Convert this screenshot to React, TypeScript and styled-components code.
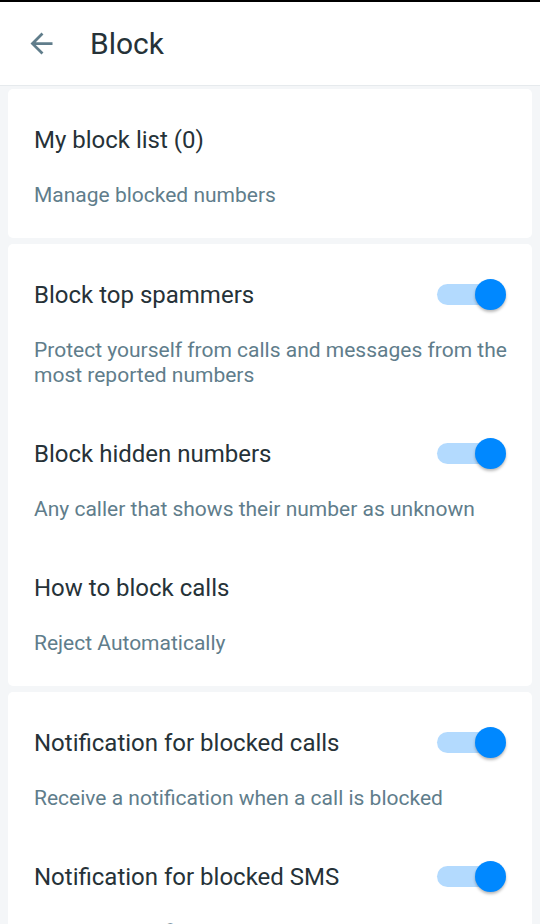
import React, { useState } from "react";
import styled, { createGlobalStyle } from "styled-components";

const GlobalStyle = createGlobalStyle`
  html, body {
    margin: 0;
    padding: 0;
    background: #f4f6f8;
    font-family: Roboto, "Noto Sans", "Liberation Sans", sans-serif;
    -webkit-font-smoothing: antialiased;
  }
  * { box-sizing: border-box; }
`;

const Screen = styled.div`
  width: 540px;
  height: 924px;
  overflow: hidden;
  background: #f4f6f8;
  border-top: 2px solid #000;
`;

const Header = styled.header`
  height: 84px;
  background: #ffffff;
  border-bottom: 1px solid #e6eaed;
  display: flex;
  align-items: center;
  padding-left: 25px;
  gap: 32px;
`;

const BackButton = styled.button`
  width: 33px;
  height: 33px;
  padding: 0;
  border: none;
  background: transparent;
  display: flex;
  align-items: center;
  justify-content: center;
  color: #607d8b;
  cursor: pointer;
`;

const HeaderTitle = styled.h1`
  margin: 0;
  font-size: 30px;
  font-weight: 400;
  color: #263238;
  line-height: 36px;
`;

const Content = styled.main`
  display: flex;
  flex-direction: column;
  gap: 6px;
  padding: 3px 8px 0;
`;

const Card = styled.section`
  background: #ffffff;
  border-radius: 5px;
  padding: 11px 0 4px;
  display: flex;
  flex-direction: column;
`;

const Row = styled.div`
  padding: 25px 26px 26px;
  display: flex;
  flex-direction: column;
  gap: 28px;
`;

const TitleLine = styled.div`
  display: flex;
  align-items: center;
  justify-content: space-between;
  height: 30px;
`;

const Title = styled.div`
  font-size: 24px;
  line-height: 30px;
  color: #263238;
`;

const Subtitle = styled.div`
  font-size: 21px;
  line-height: 25px;
  color: #607d8b;
  margin-right: -12px;
`;

const SwitchRoot = styled.button<{ $on: boolean }>`
  position: relative;
  width: 69px;
  height: 31px;
  padding: 0;
  border: none;
  background: transparent;
  cursor: pointer;
  flex-shrink: 0;
  margin-top: -2px;
`;

const Track = styled.span<{ $on: boolean }>`
  position: absolute;
  left: 0;
  top: 5px;
  width: 60px;
  height: 21px;
  border-radius: 11px;
  background: ${(p) => (p.$on ? "#b3dafe" : "#cfd8dc")};
`;

const Thumb = styled.span<{ $on: boolean }>`
  position: absolute;
  top: 0;
  left: ${(p) => (p.$on ? "38px" : "0")};
  width: 31px;
  height: 31px;
  border-radius: 50%;
  background: ${(p) => (p.$on ? "#0088ff" : "#fafafa")};
  box-shadow: 0 2px 3px rgba(0, 0, 0, 0.28);
`;

function Switch({ initial }: { initial: boolean }) {
  const [on, setOn] = useState(initial);
  return (
    <SwitchRoot $on={on} role="switch" aria-checked={on} onClick={() => setOn(!on)}>
      <Track $on={on} />
      <Thumb $on={on} />
    </SwitchRoot>
  );
}

type Item = { title: string; subtitle: string; toggle?: boolean };

const groups: Item[][] = [
  [{ title: "My block list (0)", subtitle: "Manage blocked numbers" }],
  [
    {
      title: "Block top spammers",
      subtitle: "Protect yourself from calls and messages from the most reported numbers",
      toggle: true,
    },
    {
      title: "Block hidden numbers",
      subtitle: "Any caller that shows their number as unknown",
      toggle: true,
    },
    { title: "How to block calls", subtitle: "Reject Automatically" },
  ],
  [
    {
      title: "Notification for blocked calls",
      subtitle: "Receive a notification when a call is blocked",
      toggle: true,
    },
    {
      title: "Notification for blocked SMS",
      subtitle: "Receive a notification when a message is blocked",
      toggle: true,
    },
  ],
];

export default function App() {
  return (
    <>
      <GlobalStyle />
      <Screen>
        <Header>
          <BackButton aria-label="Back">
            <svg width="33" height="33" viewBox="0 0 24 24" fill="currentColor">
              <path d="M20 11H7.83l5.59-5.59L12 4l-8 8 8 8 1.41-1.41L7.83 13H20v-2z" />
            </svg>
          </BackButton>
          <HeaderTitle>Block</HeaderTitle>
        </Header>
        <Content>
          {groups.map((g, gi) => (
            <Card key={gi}>
              {g.map((it) => (
                <Row key={it.title}>
                  <TitleLine>
                    <Title>{it.title}</Title>
                    {it.toggle && <Switch initial={true} />}
                  </TitleLine>
                  <Subtitle>{it.subtitle}</Subtitle>
                </Row>
              ))}
            </Card>
          ))}
        </Content>
      </Screen>
    </>
  );
}
